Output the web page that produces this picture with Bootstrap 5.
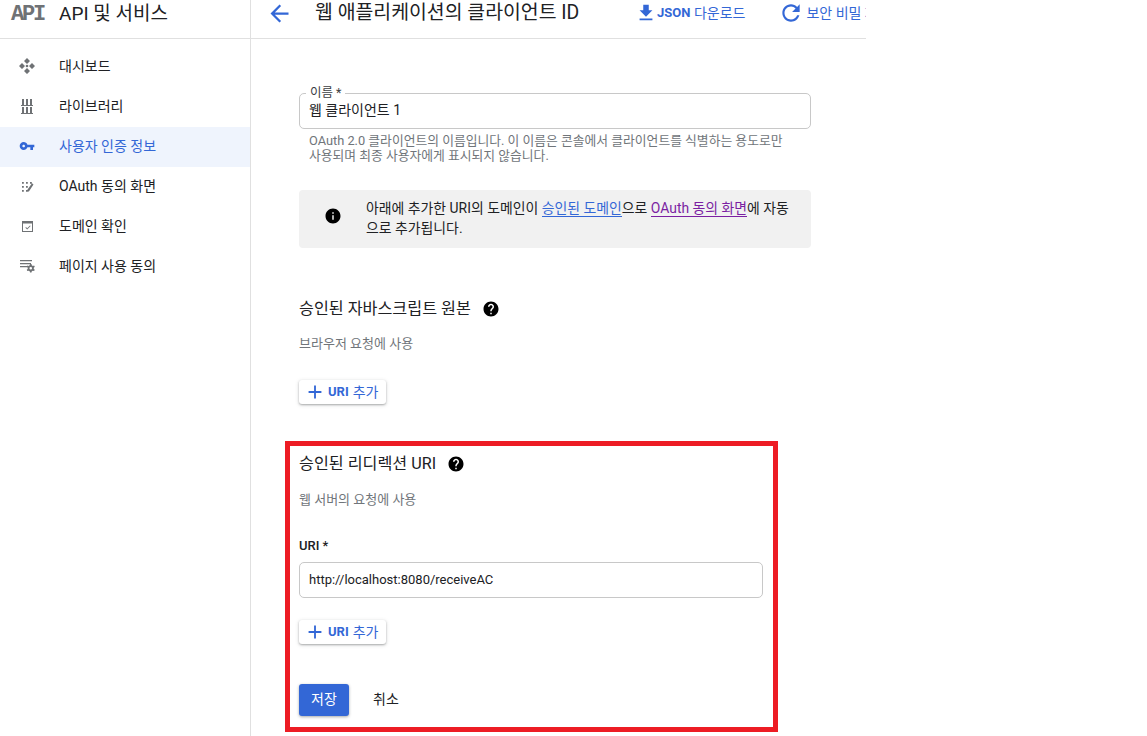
<!DOCTYPE html>
<html lang="ko">
<head>
<meta charset="utf-8">
<title>웹 애플리케이션의 클라이언트 ID</title>
<link href="https://cdn.jsdelivr.net/npm/bootstrap@5.3.0/dist/css/bootstrap.min.css" rel="stylesheet">
<style>
html,body{height:100%;overflow:hidden}
body{font-family:Roboto,"Noto Sans CJK KR",sans-serif;background:#fff;color:#202124;font-size:14px}
.shell{width:866px;height:736px;overflow:hidden}
.topbar{height:39px;border-bottom:1px solid #e0e0e0;flex:none}
.brand{width:251px;border-right:1px solid #e0e0e0;height:38px;flex:none;padding:0 0 11px 11px}
.api-logo{font-family:"Liberation Mono",monospace;font-weight:700;font-size:22px;letter-spacing:-2.2px;color:#6f7275;width:48px;line-height:1;padding-top:2px}
.brand-name{font-size:19px;color:#202124;line-height:24px}
.titlearea{padding:0 0 12px 15px;height:38px;min-width:0;overflow:hidden;white-space:nowrap}
.titlearea>svg{flex:none}
.page-title{font-size:19.4px;font-weight:400;margin:0 0 0 22px;width:320px;line-height:24px;flex:none}
.tool-link{color:#3367d6;font-size:14px;line-height:16px;text-decoration:none;flex:none}
.tool-link b{font-weight:700;font-size:13px}
.side{width:251px;border-right:1px solid #e0e0e0;padding-top:8px;flex:none}
.side-item{height:40px;padding:0 0 2px 19px;color:#202124;text-decoration:none;font-size:14px}
.side-item svg{width:16px;height:16px;margin-right:24px;fill:#6f7275;flex:none}
.side-item.on{background:#eff4fd;color:#3367d6}
.side-item.on svg{fill:#3367d6}
.form-area{width:615px;padding:54px 0 0 48px}
.box-field{width:512px;height:36px;border:1px solid #c8c8c8;border-radius:5px;padding:0 9px;font-size:14px;line-height:32px}
.legend{font-size:12.5px;color:#3c4043;background:#fff;padding:0 4px;top:-9px;left:6px;line-height:16px}
.hint{font-size:12.8px;line-height:15px;color:#70757a;margin:4px 0 0 10px;white-space:nowrap}
.notice{width:512px;height:58px;margin-top:27px;background:#f1f1f1;border-radius:4px}
.notice svg{width:18px;height:18px;margin:0 24px 6px 25px;flex:none}
.notice-body{padding-bottom:2px}
.notice-text{font-size:13.9px;line-height:20px;white-space:nowrap}
.lnk{color:#3367d6;text-decoration:none;border-bottom:1px solid #3367d6}
.lnk.seen{color:#7b1fa2;border-color:#7b1fa2}
.sect-title{font-size:16.2px;line-height:20px;margin:0;font-weight:400;color:#202124}
.sect-title svg{width:18px;height:18px;margin-left:11px;flex:none}
.sect-hint{font-size:13px;line-height:16px;color:#70757a;margin:0}
.add-btn{width:87px;height:24px;padding:0 0 0 5px;border:0;background:#fff;border-radius:3px;color:#3367d6;font-size:14px;box-shadow:0 1px 2px rgba(60,64,67,.35),0 1px 4px rgba(60,64,67,.18)}
.add-btn svg{width:22px;height:22px;fill:#3367d6;margin-right:2px;flex:none}
.add-btn b{font-weight:700;font-size:13px;margin-right:4px}
.gap-top-a{margin-top:51px}
.gap-top-b{margin-top:17px}
.gap-top-c{margin-top:28px}
.gap-top-d{margin-top:18px}
.gap-top-e{margin-top:22px}
.gap-top-f{margin-top:40px}
.redbox{width:493px;height:291px;margin:37px 0 0 -14px;border:5px solid #ed1c24;padding:8px 9px 0}
.uri-label{font-size:13px;font-weight:500;line-height:16px;color:#202124;margin-top:30px}
.uri-field{width:464px;height:36px;border:1px solid #c8c8c8;border-radius:5px;padding:0 9px;font-size:13px;line-height:33px;margin-top:8px}
.save-btn{width:50px;height:32px;padding:0 0 2px;background:#3367d6;border:0;border-radius:3px;color:#fff;font-size:14px;box-shadow:0 1px 3px rgba(60,64,67,.45)}
.cancel-btn{padding:0 0 2px;border:0;background:none;color:#202124;font-size:14px;margin-left:24px}
</style>
</head>
<body>
<div class="shell d-flex flex-column">
  <header class="topbar d-flex">
    <div class="brand d-flex align-items-center">
      <span class="api-logo">API</span>
      <span class="brand-name">API 및 서비스</span>
    </div>
    <div class="titlearea d-flex align-items-center flex-grow-1">
      <svg width="27" height="27" viewBox="0 0 24 24" fill="#3367d6"><path d="M20 11H7.83l5.59-5.59L12 4l-8 8 8 8 1.41-1.41L7.83 13H20v-2z"/></svg>
      <h1 class="page-title">웹 애플리케이션의 클라이언트 ID</h1>
      <a class="tool-link d-flex align-items-center" href="#"><svg width="22" height="22" viewBox="0 0 24 24" fill="#3367d6"><path d="M19 9h-4V3H9v6H5l7 7 7-7zM5 18v2h14v-2H5z"/></svg><b>JSON</b>&nbsp;다운로드</a>
      <a class="tool-link d-flex align-items-center" style="margin-left:33px" href="#"><svg width="26" height="26" viewBox="0 0 24 24" fill="#3367d6" style="margin-right:2px"><path d="M17.65 6.35C16.2 4.9 14.21 4 12 4c-4.42 0-7.99 3.58-7.99 8s3.57 8 7.99 8c3.73 0 6.84-2.55 7.73-6h-2.08c-.82 2.33-3.04 4-5.65 4-3.31 0-6-2.69-6-6s2.69-6 6-6c1.66 0 3.14.69 4.22 1.78L13 11h7V4l-2.35 2.35z"/></svg>보안 비밀 재설정</a>
    </div>
  </header>
  <div class="d-flex flex-grow-1">
    <nav class="side">
      <a class="side-item d-flex align-items-center" href="#"><svg viewBox="0 0 16 16"><path d="M8 0l3 3-3 3-3-3zM8 10l3 3-3 3-3-3zM3 5l3 3-3 3-3-3zM13 5l3 3-3 3-3-3z"/><circle cx="8" cy="8" r="1.3"/></svg>대시보드</a>
      <a class="side-item d-flex align-items-center" href="#"><svg viewBox="0 0 16 16"><path d="M2 7h12v1H2zM2 15h12v1H2zM3 1h2v6H3zM7 1h2v6H7zM11 1h2v6h-2zM3 9h2v6H3zM7 9h2v6H7zM11 9h2v6h-2z"/></svg>라이브러리</a>
      <a class="side-item on d-flex align-items-center" href="#"><svg viewBox="0 0 24 24"><path d="M12.65 10C11.830 7.670 9.610 6 7 6c-3.310 0-6 2.690-6 6s2.690 6 6 6c2.610 0 4.830-1.670 5.650-4H17v4h4v-4h2v-4H12.650zM7 14c-1.100 0-2-.9-2-2s.9-2 2-2 2 .9 2 2-.9 2-2 2z"/></svg>사용자 인증 정보</a>
      <a class="side-item d-flex align-items-center" href="#"><svg viewBox="0 0 16 16"><path d="M3 4h1.800v1.800H3zM7 4h1.800v1.800H7zM11 4h1.800v1.800H11zM3 8h1.800v1.800H3zM7 8h1.800v1.800H7zM3 12h1.800v1.800H3zM7 12h1.800v1.800H7zM14.500 6.500l-4.600 7H8.200l.2-1.700 4.600-6.500z"/></svg>OAuth 동의 화면</a>
      <a class="side-item d-flex align-items-center" href="#"><svg viewBox="0 0 16 16"><path fill-rule="evenodd" d="M3 3h11v11H3zm1 2.500V13h9V5.500zM11 7.500l.6.600-3.400 3.400-1.800-1.800.6-.6 1.200 1.200z"/></svg>도메인 확인</a>
      <a class="side-item d-flex align-items-center" href="#"><svg viewBox="0 0 16 16"><path d="M1 2h12v1.300H1zM1 5h11v1.300H1zM1 8h7v1.300H1z"/><path fill-rule="evenodd" d="M11.500 5.500h1.500l.3 1.300 1.100.6 1.200-.4.700 1.300-1 .9v1.200l1 .9-.7 1.300-1.200-.4-1.100.6-.3 1.300h-1.500l-.3-1.300-1.100-.6-1.200.4-.7-1.300 1-.9V9.200l-1-.9.7-1.300 1.200.4 1.100-.6zm.75 3a1.300 1.300 0 1 0 0 2.600 1.300 1.300 0 0 0 0-2.600z" transform="translate(-.5 .5)"/></svg>페이지 사용 동의</a>
    </nav>
    <main class="form-area">
      <div class="box-field position-relative"><span class="legend position-absolute">이름 *</span>웹 클라이언트 1</div>
      <p class="hint">OAuth 2.0 클라이언트의 이름입니다. 이 이름은 콘솔에서 클라이언트를 식별하는 용도로만<br>사용되며 최종 사용자에게 표시되지 않습니다.</p>
      <div class="notice d-flex align-items-center">
        <svg viewBox="0 0 24 24"><path d="M12 2C6.480 2 2 6.480 2 12s4.480 10 10 10 10-4.480 10-10S17.520 2 12 2zm1 15h-2v-6h2v6zm0-8h-2V7h2v2z"/></svg>
        <div class="notice-body">
          <div class="notice-text">아래에 추가한 URI의 도메인이 <a class="lnk" href="#">승인된 도메인</a>으로 <a class="lnk seen" href="#">OAuth 동의 화면</a>에 자동</div>
          <div class="notice-text">으로 추가됩니다.</div>
        </div>
      </div>
      <h2 class="sect-title d-flex align-items-center gap-top-a">승인된 자바스크립트 원본<svg viewBox="0 0 24 24"><path d="M12 2C6.480 2 2 6.480 2 12s4.480 10 10 10 10-4.480 10-10S17.520 2 12 2zm1 17h-2v-2h2v2zm2.070-7.750l-.9.920C13.450 12.900 13 13.500 13 15h-2v-.5c0-1.100.45-2.100 1.170-2.830l1.240-1.260c.37-.36.59-.86.59-1.410 0-1.100-.9-2-2-2s-2 .9-2 2H8c0-2.210 1.790-4 4-4s4 1.790 4 4c0 .88-.36 1.680-.93 2.250z"/></svg></h2>
      <p class="sect-hint gap-top-b">브라우저 요청에 사용</p>
      <button class="add-btn d-flex align-items-center gap-top-c"><svg viewBox="0 0 24 24"><path d="M19 13h-6v6h-2v-6H5v-2h6V5h2v6h6v2z"/></svg><b>URI</b>추가</button>
      <section class="redbox">
        <h2 class="sect-title d-flex align-items-center">승인된 리디렉션 URI<svg viewBox="0 0 24 24"><path d="M12 2C6.480 2 2 6.480 2 12s4.480 10 10 10 10-4.480 10-10S17.520 2 12 2zm1 17h-2v-2h2v2zm2.070-7.750l-.9.920C13.450 12.900 13 13.500 13 15h-2v-.5c0-1.100.45-2.100 1.170-2.830l1.240-1.260c.37-.36.59-.86.59-1.410 0-1.100-.9-2-2-2s-2 .9-2 2H8c0-2.210 1.790-4 4-4s4 1.790 4 4c0 .88-.36 1.680-.93 2.250z"/></svg></h2>
        <p class="sect-hint gap-top-d">웹 서버의 요청에 사용</p>
        <div class="uri-label">URI *</div>
        <div class="uri-field">http://localhost:8080/receiveAC</div>
        <button class="add-btn d-flex align-items-center gap-top-e"><svg viewBox="0 0 24 24"><path d="M19 13h-6v6h-2v-6H5v-2h6V5h2v6h6v2z"/></svg><b>URI</b>추가</button>
        <div class="d-flex align-items-center gap-top-f">
          <button class="save-btn">저장</button>
          <button class="cancel-btn">취소</button>
        </div>
      </section>
    </main>
  </div>
</div>
<script src="https://cdn.jsdelivr.net/npm/bootstrap@5.3.0/dist/js/bootstrap.bundle.min.js"></script>
</body>
</html>
